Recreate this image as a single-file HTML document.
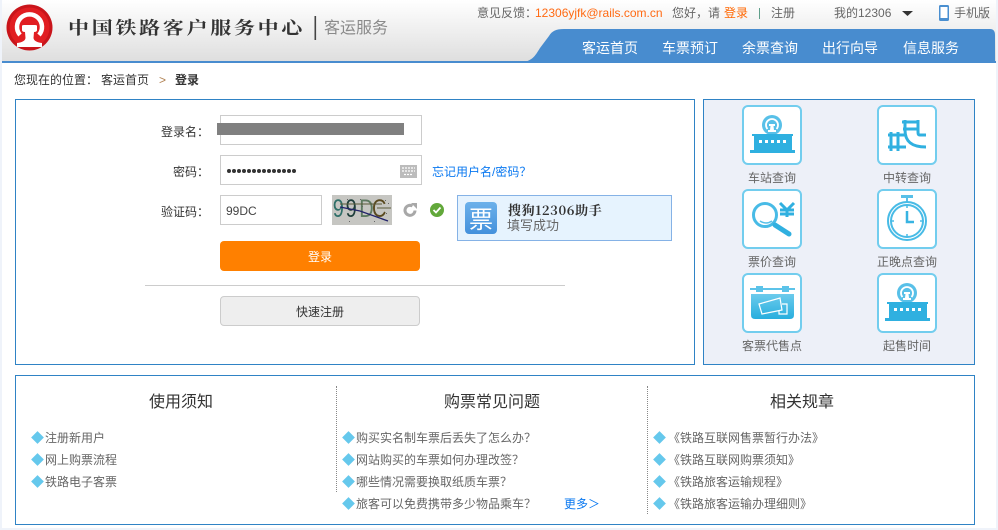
<!DOCTYPE html>
<html lang="zh">
<head>
<meta charset="utf-8">
<title>登录</title>
<style>
html,body{margin:0;padding:0;background:#eff3fa;}
#p{position:relative;width:994px;height:528px;left:2px;background:#fff;overflow:hidden;font-family:"Liberation Sans","WenQuanYi Zen Hei","Noto Sans CJK SC",sans-serif;font-size:12px;color:#666;}
#w{position:absolute;left:-2px;top:0;width:998px;height:530px;}
.t{position:absolute;white-space:nowrap;line-height:16px;}
.b{position:absolute;box-sizing:border-box;}
.i{border:1px solid #ccc;background:#fff;}
.d{position:absolute;width:9px;height:9px;background:#65c8ec;transform:rotate(45deg);}
.ic{position:absolute;left:0;top:0;}
.c{text-align:center;}
svg{display:block;}
</style>
</head>
<body>
<div id="p"><div id="w">

<div class="b" style="left:0;top:0;width:998px;height:62px;background:linear-gradient(#fff,#dedede);"></div>
<svg class="ic" style="left:0;top:0" width="998" height="64" viewBox="0 0 998 64">
  <path d="M520 62C532 62 535 56 540 48L549 36C552 31 556 29 564 29H990Q995 29 995 35V62Z" fill="#488ccf"/>
  <rect x="2" y="61" width="994" height="2" fill="#488ccf"/>
  <circle cx="29.500" cy="27.500" r="23" fill="#c9151b"/>
  <circle cx="29.500" cy="27.500" r="20" fill="#e11e22"/>
  <path d="M20 35A12.500 12.500 0 1 1 39 35" fill="none" stroke="#fff" stroke-width="4.500"/>
  <path d="M22 26Q22 25 24 25H35Q37 25 37 26V30Q37 32 34 32L33.500 38Q34 42 42 43V47H17V43Q25 42 25.500 38L25 32Q22 32 22 30Z" fill="#fff"/>
  <rect x="314.500" y="16" width="1.600" height="24" fill="#444"/>
  <path d="M902 11H913L907.500 16Z" fill="#333"/>
  <rect x="939" y="5" width="10" height="16" rx="1.500" fill="#4a8fd0"/>
  <rect x="940.500" y="7" width="7" height="11" fill="#fff"/>
</svg>
<div class="t" style="left:68px;top:14px;font:bold 21px/26px 'Noto Serif CJK SC',serif;letter-spacing:2.700px;color:#333;transform:scaleY(.85);transform-origin:left center;">中国铁路客户服务中心</div>
<div class="t" style="left:324px;top:20px;font-size:16px;line-height:18px;color:#8a8a8a;">客运服务</div>

<div class="t" style="left:477px;top:5px;">意见反馈&#65306;</div>
<div class="t" style="left:535px;top:5px;color:#ff6a13;">12306yjfk@rails.com.cn</div>
<div class="t" style="left:672px;top:5px;">您好&#65292;请</div>
<div class="t" style="left:724px;top:5px;color:#f60;">登录</div>
<div class="b" style="left:759px;top:8px;width:1px;height:11px;background:#5f9f8a;"></div>
<div class="t" style="left:771px;top:5px;">注册</div>
<div class="t" style="left:834px;top:5px;">我的12306</div>
<div class="t" style="left:954px;top:5px;">手机版</div>

<div class="t" style="left:582px;top:40px;font-size:14px;color:#fff;">客运首页</div>
<div class="t" style="left:662px;top:40px;font-size:14px;color:#fff;">车票预订</div>
<div class="t" style="left:742px;top:40px;font-size:14px;color:#fff;">余票查询</div>
<div class="t" style="left:822px;top:40px;font-size:14px;color:#fff;">出行向导</div>
<div class="t" style="left:903px;top:40px;font-size:14px;color:#fff;">信息服务</div>

<div class="t" style="left:14px;top:72px;color:#333;">您现在的位置&#65306;</div>
<div class="t" style="left:101px;top:72px;color:#333;">客运首页</div>
<div class="t" style="left:159px;top:72px;color:#b08050;">&gt;</div>
<div class="t" style="left:175px;top:72px;color:#333;font-weight:bold;">登录</div>

<div class="b" style="left:15px;top:99px;width:680px;height:266px;border:1px solid #2f83c5;"></div>
<div class="b" style="left:703px;top:99px;width:272px;height:266px;border:1px solid #2f83c5;background:#edf0f8;"></div>

<div class="t" style="left:161px;top:124px;color:#333;">登录名&#65306;</div>
<div class="b i" style="left:220px;top:115px;width:202px;height:30px;"></div>
<div class="b" style="left:217px;top:123px;width:187px;height:12px;background:#808080;"></div>

<div class="t" style="left:173px;top:164px;color:#333;">密码&#65306;</div>
<div class="b i" style="left:220px;top:155px;width:202px;height:30px;"></div>
<svg class="ic" style="left:226px;top:167px" width="72" height="8" viewBox="0 0 72 8">
  <g fill="#333"><circle cx="3" cy="4" r="2"/><circle cx="8" cy="4" r="2"/><circle cx="13" cy="4" r="2"/><circle cx="18" cy="4" r="2"/><circle cx="23" cy="4" r="2"/><circle cx="28" cy="4" r="2"/><circle cx="33" cy="4" r="2"/><circle cx="38" cy="4" r="2"/><circle cx="43" cy="4" r="2"/><circle cx="48" cy="4" r="2"/><circle cx="53" cy="4" r="2"/><circle cx="58" cy="4" r="2"/><circle cx="63" cy="4" r="2"/><circle cx="68" cy="4" r="2"/></g>
</svg>
<svg class="ic" style="left:400px;top:165px" width="17" height="13" viewBox="0 0 17 13">
  <rect width="17" height="13" fill="#bcbcbc"/>
  <path d="M2 3H15M2 6H15M4 9.500H13" stroke="#fff" stroke-width="1.200" stroke-dasharray="2 1"/>
</svg>
<div class="t" style="left:432px;top:164px;color:#0a78f0;">忘记用户名/密码&#65311;</div>

<div class="t" style="left:161px;top:204px;color:#333;">验证码&#65306;</div>
<div class="b i" style="left:220px;top:195px;width:102px;height:30px;"></div>
<div class="t" style="left:226px;top:203px;color:#444;">99DC</div>
<svg class="ic" style="left:332px;top:195px" width="60" height="30" viewBox="0 0 60 30">
  <rect width="60" height="30" fill="#c6c6c2"/>
  <text y="22" transform="scale(.8 1)" font-family="Liberation Sans,sans-serif" font-size="25">
    <tspan x="1" fill="#2f6f68">9</tspan><tspan x="17" fill="#1e3e3a">9</tspan><tspan x="34" fill="#5d7a60">D</tspan><tspan x="50" fill="#5a4a20">C</tspan>
  </text>
  <path d="M8 9H50M45 13H59" stroke="#5a5a3a" stroke-width="1"/>
  <path d="M8 12L28 16L56 26" stroke="#22226a" stroke-width="1.300" fill="none"/>
  <g fill="#666"><rect x="15" y="4" width="1" height="1"/><rect x="28" y="4" width="1" height="1"/><rect x="34" y="5" width="1" height="1"/><rect x="53" y="5" width="1" height="1"/><rect x="56" y="8" width="1" height="1"/><rect x="30" y="11" width="1" height="1"/><rect x="17" y="26" width="1" height="1"/><rect x="42" y="26" width="1" height="1"/><rect x="54" y="18" width="1" height="1"/></g>
</svg>
<svg class="ic" style="left:402px;top:202px" width="16" height="16" viewBox="0 0 16 16">
  <path d="M13 8.500A5 5 0 1 1 10.500 4" fill="none" stroke="#a8a8a8" stroke-width="3"/>
  <path d="M9 1L15 1V7Z" fill="#a8a8a8"/>
</svg>
<svg class="ic" style="left:430px;top:203px" width="14" height="14" viewBox="0 0 14 14">
  <circle cx="7" cy="7" r="7" fill="#62a83a"/>
  <path d="M3.500 7L6 9.500L10.500 4.500" fill="none" stroke="#fff" stroke-width="1.800"/>
</svg>

<div class="b" style="left:457px;top:195px;width:215px;height:46px;background:#e6f3fe;border:1px solid #85b2e6;"></div>
<div class="b" style="left:465px;top:202px;width:32px;height:32px;border-radius:4px;background:linear-gradient(#6cb1ea,#4491dc);color:#fff;font-size:24px;line-height:32px;text-align:center;font-family:'Noto Sans CJK SC',sans-serif;">票</div>
<div class="t" style="left:508px;top:202px;font-family:'Noto Serif CJK SC',serif;font-weight:bold;font-size:13px;letter-spacing:.6px;color:#333;">搜狗12306助手</div>
<div class="t" style="left:507px;top:218px;font-size:13px;color:#666;">填写成功</div>

<div class="b c" style="left:220px;top:241px;width:200px;height:30px;background:#ff8000;border-radius:4px;color:#fff;line-height:32px;">登录</div>
<div class="b" style="left:145px;top:285px;width:420px;height:1px;background:#ccc;"></div>
<div class="b c" style="left:220px;top:296px;width:200px;height:30px;background:#eee;border:1px solid #ccc;border-radius:4px;color:#333;line-height:30px;">快速注册</div>

<svg class="ic" style="left:742px;top:105px" width="60" height="60" viewBox="0 0 60 60">
  <rect x="1" y="1" width="58" height="58" rx="5" fill="#fff" stroke="#72cdee" stroke-width="2"/>
  <circle cx="30" cy="20" r="10" fill="#58c0e8"/>
  <path d="M25.500 24A6 6 0 1 1 34.500 24" fill="none" stroke="#fff" stroke-width="1.800"/>
  <path d="M27 19H33V21H31.500L32 25H34V27H26V25H28L28.500 21H27Z" fill="#fff"/>
  <rect x="10" y="29" width="41" height="2" fill="#2fb0e0"/>
  <rect x="12" y="31" width="38" height="14" fill="#2fb0e0"/>
  <g fill="#fff"><rect x="17" y="35" width="3" height="3"/><rect x="23" y="35" width="3" height="3"/><rect x="29" y="35" width="3" height="3"/><rect x="35" y="35" width="3" height="3"/><rect x="41" y="35" width="3" height="3"/></g>
  <rect x="8" y="45" width="45" height="3" fill="#2fb0e0"/>
</svg>
<svg class="ic" style="left:877px;top:105px" width="60" height="60" viewBox="0 0 60 60">
  <rect x="1" y="1" width="58" height="58" rx="5" fill="#fff" stroke="#72cdee" stroke-width="2"/>
  <g fill="none" stroke="#30b0e0" stroke-width="3">
    <path d="M25 17H42M26 24H41M11 30H28M11 42H29"/>
    <path d="M28 15V25C28 36 34 42 49 42"/>
    <path d="M41 15V25C41 29 41 30 43 30H49"/>
    <path d="M14 27V46M21 27V46"/>
  </g>
</svg>
<svg class="ic" style="left:742px;top:189px" width="60" height="60" viewBox="0 0 60 60">
  <rect x="1" y="1" width="58" height="58" rx="5" fill="#fff" stroke="#72cdee" stroke-width="2"/>
  <circle cx="23" cy="26" r="11.500" fill="none" stroke="#48bbe6" stroke-width="3"/>
  <path d="M18 32Q24 36 30 32" fill="none" stroke="#58c0e8" stroke-width="1.500"/>
  <path d="M33 36L47 45" stroke="#30b0e0" stroke-width="5" stroke-linecap="round"/>
  <path d="M38 14L45 21L52 14M38 21H52M38 25H52M45 21V28" fill="none" stroke="#30b0e0" stroke-width="3"/>
</svg>
<svg class="ic" style="left:877px;top:189px" width="60" height="60" viewBox="0 0 60 60">
  <rect x="1" y="1" width="58" height="58" rx="5" fill="#fff" stroke="#72cdee" stroke-width="2"/>
  <rect x="24" y="6" width="12" height="3" fill="#58c0e8"/>
  <rect x="29" y="9" width="2" height="4" fill="#58c0e8"/>
  <circle cx="30" cy="32" r="19" fill="none" stroke="#48bbe6" stroke-width="2"/>
  <circle cx="30" cy="32" r="16" fill="none" stroke="#48bbe6" stroke-width="2"/>
  <path d="M30 22V33H37" fill="none" stroke="#38b4e2" stroke-width="2.500"/>
  <path d="M30 16V19M30 45V48M14 32H17M43 32H46" stroke="#48bbe6" stroke-width="1.500"/>
</svg>
<svg class="ic" style="left:742px;top:273px" width="60" height="60" viewBox="0 0 60 60">
  <defs><linearGradient id="g" x1="0" y1="0" x2="0" y2="1"><stop offset="0" stop-color="#6ccbec"/><stop offset="1" stop-color="#28aede"/></linearGradient></defs>
  <rect x="1" y="1" width="58" height="58" rx="5" fill="#fff" stroke="#72cdee" stroke-width="2"/>
  <rect x="8" y="15" width="45" height="2" fill="#5cc3e9"/>
  <rect x="14" y="13" width="7" height="6" fill="#5cc3e9"/>
  <rect x="40" y="13" width="7" height="6" fill="#5cc3e9"/>
  <path d="M9 21H52V42Q52 46 48 46H13Q9 46 9 42Z" fill="url(#g)"/>
  <path d="M17 31L38 25L40 37L20 41Z" fill="none" stroke="#fff" stroke-width="1.200"/>
  <path d="M40 31L45 31V41H37V38" fill="none" stroke="#fff" stroke-width="1.200"/>
</svg>
<svg class="ic" style="left:877px;top:273px" width="60" height="60" viewBox="0 0 60 60">
  <rect x="1" y="1" width="58" height="58" rx="5" fill="#fff" stroke="#72cdee" stroke-width="2"/>
  <circle cx="30" cy="20" r="10" fill="#58c0e8"/>
  <path d="M25.500 24A6 6 0 1 1 34.500 24" fill="none" stroke="#fff" stroke-width="1.800"/>
  <path d="M27 19H33V21H31.500L32 25H34V27H26V25H28L28.500 21H27Z" fill="#fff"/>
  <rect x="10" y="29" width="41" height="2" fill="#2fb0e0"/>
  <rect x="12" y="31" width="38" height="14" fill="#2fb0e0"/>
  <g fill="#fff"><rect x="17" y="35" width="3" height="3"/><rect x="23" y="35" width="3" height="3"/><rect x="29" y="35" width="3" height="3"/><rect x="35" y="35" width="3" height="3"/><rect x="41" y="35" width="3" height="3"/></g>
  <rect x="8" y="45" width="45" height="3" fill="#2fb0e0"/>
</svg>

<div class="t c" style="left:722px;width:100px;top:170px;">车站查询</div>
<div class="t c" style="left:857px;width:100px;top:170px;">中转查询</div>
<div class="t c" style="left:722px;width:100px;top:254px;">票价查询</div>
<div class="t c" style="left:857px;width:100px;top:254px;">正晚点查询</div>
<div class="t c" style="left:722px;width:100px;top:338px;">客票代售点</div>
<div class="t c" style="left:857px;width:100px;top:338px;">起售时间</div>

<div class="b" style="left:15px;top:375px;width:960px;height:150px;border:1px solid #2f83c5;"></div>
<div class="b" style="left:336px;top:386px;width:1px;height:106px;border-left:1px dotted #888;"></div>
<div class="b" style="left:647px;top:386px;width:1px;height:128px;border-left:1px dotted #888;"></div>

<div class="t c" style="left:81px;width:200px;top:394px;font-size:16px;line-height:18px;color:#333;">使用须知</div>
<div class="t c" style="left:392px;width:200px;top:394px;font-size:16px;line-height:18px;color:#333;">购票常见问题</div>
<div class="t c" style="left:702px;width:200px;top:394px;font-size:16px;line-height:18px;color:#333;">相关规章</div>

<div class="d" style="left:33px;top:433px;"></div><div class="t" style="left:45px;top:430px;">注册新用户</div>
<div class="d" style="left:33px;top:455px;"></div><div class="t" style="left:45px;top:452px;">网上购票流程</div>
<div class="d" style="left:33px;top:477px;"></div><div class="t" style="left:45px;top:474px;">铁路电子客票</div>

<div class="d" style="left:344px;top:433px;"></div><div class="t" style="left:356px;top:430px;">购买实名制车票后丢失了怎么办&#65311;</div>
<div class="d" style="left:344px;top:455px;"></div><div class="t" style="left:356px;top:452px;">网站购买的车票如何办理改签&#65311;</div>
<div class="d" style="left:344px;top:477px;"></div><div class="t" style="left:356px;top:474px;">哪些情况需要换取纸质车票&#65311;</div>
<div class="d" style="left:344px;top:499px;"></div><div class="t" style="left:356px;top:496px;">旅客可以免费携带多少物品乘车&#65311;</div>
<div class="t" style="left:564px;top:496px;color:#0a78f0;">更多&#65310;</div>

<div class="d" style="left:655px;top:433px;"></div><div class="t" style="left:668px;top:430px;">《铁路互联网售票暂行办法》</div>
<div class="d" style="left:655px;top:455px;"></div><div class="t" style="left:668px;top:452px;">《铁路互联网购票须知》</div>
<div class="d" style="left:655px;top:477px;"></div><div class="t" style="left:668px;top:474px;">《铁路旅客运输规程》</div>
<div class="d" style="left:655px;top:499px;"></div><div class="t" style="left:668px;top:496px;">《铁路旅客运输办理细则》</div>

</div></div>
</body>
</html>
